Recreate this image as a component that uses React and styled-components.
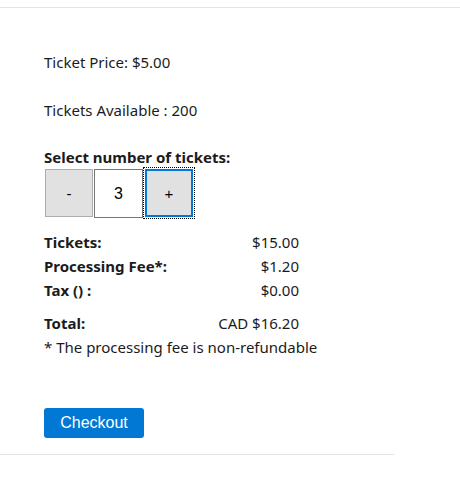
import { useState } from 'react'
import styled, { createGlobalStyle } from 'styled-components'

const GlobalStyle = createGlobalStyle`
    body {
        margin: 0;
        background: #ffffff;
        font-family: "Noto Sans", "Open Sans", Arial, sans-serif;
        color: #1b1b1b;
    }
`

const TopBar = styled.div`
    height: 7px;
    border-bottom: 1px solid #e3e3e3;
`

const Main = styled.div`
    width: 350px;
    padding: 42px 0 16px 44px;
    border-bottom: 1px solid #e3e3e3;
    font-size: 15px;
`

const Line = styled.p`
    margin: 0 0 ${p => p.$gap || 0}px;
    line-height: 24px;
`

const Label = styled.div`
    font-weight: bold;
    line-height: 24px;
`

const Stepper = styled.div`
    display: flex;
    align-items: flex-start;
    gap: 1px;
    margin: 0 0 12px 1px;
`

const StepButton = styled.button`
    width: 48px;
    height: 48px;
    margin: ${p => (p.$focused ? '0 0 0 1px' : '0')};
    padding: 0;
    background: #e1e1e1;
    border: ${p => (p.$focused ? '2px solid #0078d7' : '1px solid #adadad')};
    outline: ${p => (p.$focused ? '1px dotted #000' : 'none')};
    outline-offset: 1px;
    font-family: "Liberation Sans", Arial, sans-serif;
    font-size: 15px;
    color: #000;
    cursor: pointer;
`

const CountInput = styled.input`
    box-sizing: border-box;
    width: 49px;
    height: 49px;
    border: 1px solid #767676;
    padding: 0;
    text-align: center;
    font-family: "Liberation Sans", Arial, sans-serif;
    font-size: 16px;
    color: #000;
    outline: none;
`

const Summary = styled.div`
    width: 255px;
`

const Row = styled.div`
    display: flex;
    justify-content: space-between;
    line-height: 24px;
    margin-top: ${p => p.$top || 0}px;
`

const RowLabel = styled.span`
    font-weight: bold;
`

const Note = styled.div`
    line-height: 24px;
    margin-bottom: 49px;
`

const CheckoutButton = styled.button`
    display: block;
    width: 100px;
    height: 30px;
    border: none;
    border-radius: 3px;
    background: #0078d4;
    color: #fff;
    font-family: "Liberation Sans", Arial, sans-serif;
    font-size: 16px;
    cursor: pointer;
`

export default function App() {
    const [count, setCount] = useState(3)
    const price = 5
    const fee = 1.2
    const tickets = price * count

    return (
        <>
            <GlobalStyle />
            <TopBar />
            <Main>
                <Line $gap={24}>Ticket Price: $5.00</Line>
                <Line $gap={23}>Tickets Available : 200</Line>
                <Label>Select number of tickets:</Label>
                <Stepper>
                    <StepButton onClick={() => setCount(Math.max(0, count - 1))}>-</StepButton>
                    <CountInput value={count} readOnly />
                    <StepButton $focused onClick={() => setCount(count + 1)}>+</StepButton>
                </Stepper>
                <Summary>
                    <Row><RowLabel>Tickets:</RowLabel><span>${tickets.toFixed(2)}</span></Row>
                    <Row><RowLabel>Processing Fee*:</RowLabel><span>${fee.toFixed(2)}</span></Row>
                    <Row><RowLabel>Tax () :</RowLabel><span>$0.00</span></Row>
                    <Row $top={9}><RowLabel>Total:</RowLabel><span>CAD ${(tickets + fee).toFixed(2)}</span></Row>
                </Summary>
                <Note>* The processing fee is non-refundable</Note>
                <CheckoutButton>Checkout</CheckoutButton>
            </Main>
        </>
    )
}
